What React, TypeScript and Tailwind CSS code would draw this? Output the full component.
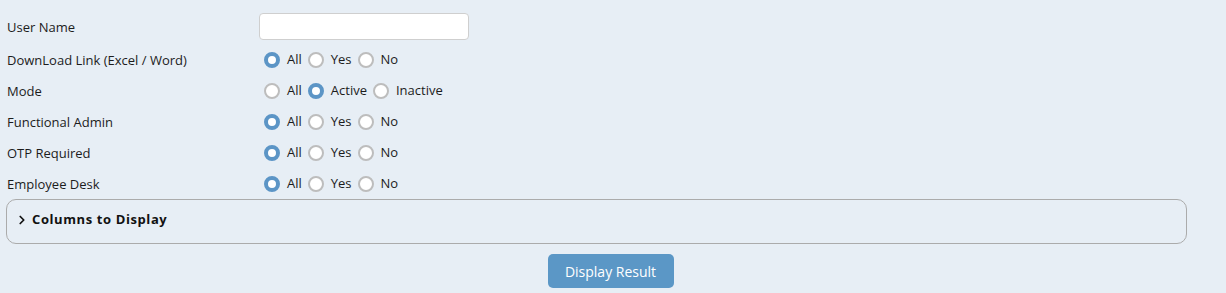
import { ChevronRight } from 'lucide-react';

type Row = { label: string; options: string[]; selected: string };

const rows: Row[] = [
  { label: 'DownLoad Link (Excel / Word)', options: ['All', 'Yes', 'No'], selected: 'All' },
  { label: 'Mode', options: ['All', 'Active', 'Inactive'], selected: 'Active' },
  { label: 'Functional Admin', options: ['All', 'Yes', 'No'], selected: 'All' },
  { label: 'OTP Required', options: ['All', 'Yes', 'No'], selected: 'All' },
  { label: 'Employee Desk', options: ['All', 'Yes', 'No'], selected: 'All' },
];

const Radio = ({ checked }: { checked: boolean }) =>
  checked ? (
    <span className="w-4 h-4 rounded-full border-[4px] border-[#5c95c6] bg-white box-border shrink-0" />
  ) : (
    <span className="w-4 h-4 rounded-full border-2 border-[#bdbdbd] bg-white box-border shrink-0" />
  );

export default function App() {
  return (
    <div className="w-[1226px] h-[293px] bg-[#e7eef5] font-['Open_Sans',sans-serif] text-[13px] text-[#1c1c1c] overflow-hidden">
      <div className="pt-[13px]">
        <div className="flex items-center h-[27px]">
          <span className="w-[259px] pl-[7px] pt-[2px]">User Name</span>
          <input
            type="text"
            className="w-[210px] h-[27px] bg-white border border-[#cfcfcf] rounded-[4px] outline-none px-2"
          />
        </div>

        <div className="mt-[4px]">
          {rows.map((row) => (
            <div key={row.label} className="flex items-center h-[31px]">
              <span className="w-[264px] pl-[7px] pt-[2px]">{row.label}</span>
              {row.options.map((opt) => (
                <label key={opt} className="flex items-center">
                  <Radio checked={opt === row.selected} />
                  <span className="ml-[7px] mr-[6px]">{opt}</span>
                </label>
              ))}
            </div>
          ))}
        </div>

        <div className="ml-[6px] w-[1181px] h-[45px] border border-[#ababab] rounded-[10px] flex items-center pl-[8px] pb-[3px]">
          <ChevronRight className="w-[14px] h-[14px] text-[#111]" strokeWidth={3} />
          <span className="ml-[3px] font-bold tracking-[0.6px] text-[#111]">Columns to Display</span>
        </div>

        <div className="w-[1221px] flex justify-center mt-[10px]">
          <button className="w-[126px] h-[34px] bg-[#5b97c6] rounded-[5px] text-white text-[14px]">
            Display Result
          </button>
        </div>
      </div>
    </div>
  );
}
